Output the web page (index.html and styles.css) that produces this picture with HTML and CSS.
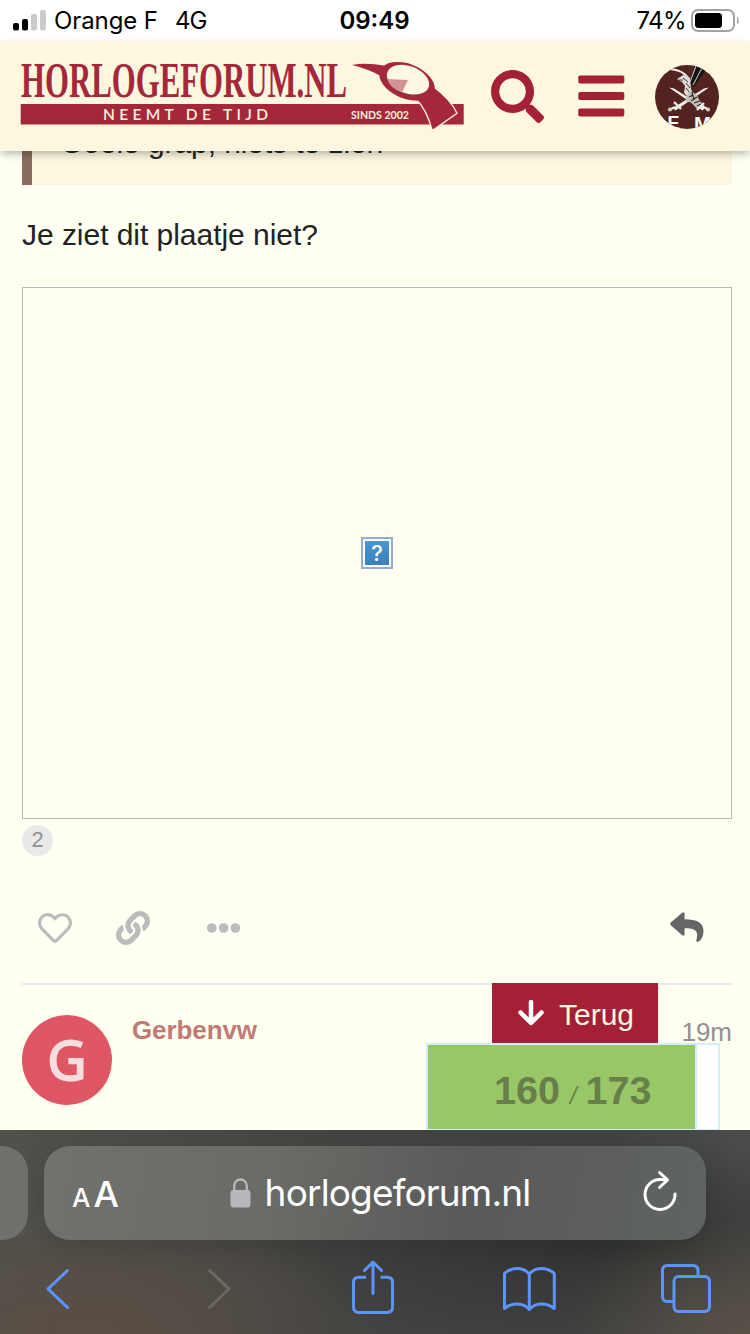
FILE: index.html
```html
<!DOCTYPE html>
<html lang="nl">
<head>
<meta charset="utf-8">
<title>Horlogeforum.nl</title>
<link rel="stylesheet" href="styles.css">
</head>
<body>
<div class="status">
  <div class="carrier">
    <svg class="signal" width="33" height="22" viewBox="0 0 33 22"><rect x="0" y="14" width="6" height="7.500" rx="2"/><rect x="9" y="10" width="6" height="11.500" rx="2"/><g fill="#cbcbcb"><rect x="18" y="5" width="6" height="16.500" rx="2"/><rect x="27" y="1" width="6" height="20.500" rx="2"/></g></svg>
    <span class="operator">Orange F</span><span class="network">4G</span>
  </div>
  <div class="clock">09:49</div>
  <div class="power"><span class="percent">74%</span>
    <svg width="48" height="24" viewBox="0 0 48 24"><rect x="1" y="1" width="42" height="21" rx="6" fill="none" stroke="#a3a3a3" stroke-width="2"/><rect x="4" y="4" width="27" height="15" rx="3.500"/><path d="M46 7.500c2.200 1 2.200 7 0 8z" fill="#a3a3a3"/></svg>
  </div>
</div>

<header class="site-header">
  <svg class="logo" width="446" height="76" viewBox="20 58 446 76">
    <text x="21" y="97" class="logo-name" textLength="326" lengthAdjust="spacingAndGlyphs">HORLOGEFORUM.NL</text>
    <rect x="20.700" y="104" width="443" height="20.500" fill="#a4283a"/>
    <text x="103" y="120" class="logo-tag" textLength="165">NEEMT DE TIJD</text>
    <text x="351" y="118.500" class="logo-since" textLength="58" lengthAdjust="spacingAndGlyphs">SINDS 2002</text>
    <g transform="translate(330 50) scale(.33333)" fill="#a4283a">
      <path d="M66 45Q105 36 166 47L190 60L152 78Q115 57 66 45Z"/>
      <path d="M258 147Q290 178 307 242L381 190Q364 150 308 108Z" stroke="#fdf3dc" stroke-width="4"/>
      <path d="M258 147L312 112L300 90L240 130Z"/>
      <ellipse cx="231" cy="94" rx="87" ry="52" transform="rotate(22 231 94)"/>
      <ellipse cx="234" cy="89" rx="66" ry="41" transform="rotate(20 234 89)" fill="#fdf9e2"/>
      <path d="M172 87L234 90L216 127Q177 112 172 87Z" fill="#d29394"/>
    </g>
  </svg>
  <nav class="header-icons">
    <svg width="53" height="53" viewBox="0 0 512 512"><path d="M505 442.700L405.300 343c-4.500-4.500-10.600-7-17-7H372c27.600-35.300 44-79.700 44-128C416 93.100 322.900 0 208 0S0 93.100 0 208s93.100 208 208 208c48.300 0 92.700-16.400 128-44v16.300c0 6.400 2.500 12.500 7 17l99.700 99.700c9.400 9.400 24.600 9.400 33.900 0l28.300-28.300c9.400-9.400 9.400-24.600.1-34zM208 336c-70.700 0-128-57.200-128-128 0-70.700 57.200-128 128-128 70.700 0 128 57.200 128 128 0 70.700-57.200 128-128 128z"/></svg>
    <svg class="bars" width="47" height="42" viewBox="0 0 47 42"><rect x=".3" y=".5" width="46" height="8" rx="1.700"/><rect x=".3" y="17" width="46" height="8" rx="1.700"/><rect x=".3" y="33.500" width="46" height="8" rx="1.700"/></svg>
    <svg class="me" width="64" height="64" viewBox="0 0 64 64">
      <defs><clipPath id="round"><circle cx="32" cy="32" r="32"/></clipPath></defs>
      <g clip-path="url(#round)">
        <rect width="64" height="64" fill="#53241f"/>
        <path d="M41 0L34 18L39 22L51 4L48 0Z" fill="#171514"/>
        <path d="M41 1L35 17M47 3L38 20" stroke="#d8d4d1" stroke-width="1" fill="none"/>
        <path d="M15 4Q28 5 33 13" stroke="#f4f1ee" stroke-width="2.200" fill="none"/>
        <path d="M22 14L30 9L35 13L36 24L39 30L34 33L29 28L30 21L27 17Z" fill="#dedad7"/>
        <path d="M28 13L33 17M31 18L35 23M31 23L35 28M24 15L28 15" stroke="#403735" stroke-width="1"/>
        <path d="M14 22.500L19 23.500L50 43L47.500 45.500ZM54 22.500L49 23.500L18 43L20.500 45.500Z" fill="#f4f2ef"/>
        <path d="M31 32L35 26L41 29L45 36L49 41L42 44L36 37L31 37Z" fill="#c5c0bb"/>
        <path d="M34 32L38 30M36 36L42 32M39 38L45 36M42 41L46 39M37 27L39 35" stroke="#302724" stroke-width="1.200"/>
        <path d="M19 37L26 44M14 45L20 42M42 45L49 38M47 41L54 45" stroke="#eeeae7" stroke-width="2.400"/>
        <circle cx="15" cy="44.500" r="2" fill="#d6d1cd"/><circle cx="53" cy="44.500" r="2" fill="#d6d1cd"/>
        <text x="12.500" y="63.500" class="crest" textLength="12" lengthAdjust="spacingAndGlyphs">E</text><text x="39" y="64.500" class="crest" textLength="17" lengthAdjust="spacingAndGlyphs">M</text>
      </g>
    </svg>
  </nav>
</header>

<main class="topic">
  <blockquote class="quote"><p>Goeie grap, niets te zien</p></blockquote>
  <p class="message">Je ziet dit plaatje niet?</p>
  <div class="missing-image"><span class="placeholder">?</span></div>
  <div class="clicks">2</div>
  <div class="actions">
    <svg width="34" height="34" viewBox="0 0 512 512"><path d="M458.400 64.300C400.600 15.700 311.300 23 256 79.300 200.700 23 111.400 15.600 53.600 64.300-21.600 127.600-10.600 230.800 43 285.500l175.400 178.700c10 10.200 23.400 15.900 37.600 15.900 14.300 0 27.600-5.600 37.600-15.800L469 285.600c53.500-54.700 64.700-157.900-10.600-221.300zm-23.600 187.500L259.400 430.500c-2.400 2.400-4.400 2.400-6.800 0L77.200 251.800c-36.500-37.200-43.900-107.600 7.300-150.700 38.900-32.700 98.900-27.800 136.500 10.500l35 35.700 35-35.700c37.800-38.500 97.800-43.200 136.500-10.600 51.100 43.100 43.500 113.900 7.300 150.800z"/></svg>
    <svg class="link" width="34" height="34" viewBox="0 0 512 512"><path d="M326.612 185.391c59.747 59.809 58.927 155.698.36 214.590-.11.12-.24.25-.36.37l-67.200 67.200c-59.270 59.270-155.699 59.262-214.960 0-59.270-59.260-59.270-155.700 0-214.960l37.106-37.106c9.840-9.840 26.786-3.300 27.294 10.606.648 17.722 3.826 35.527 9.690 52.721 1.986 5.822.567 12.262-3.783 16.612l-13.087 13.087c-28.026 28.026-28.905 73.660-1.155 101.960 28.024 28.579 74.086 28.749 102.325.51l67.200-67.190c28.191-28.191 28.073-73.757 0-101.830-3.701-3.694-7.429-6.564-10.341-8.569a16.037 16.037 0 0 1-6.947-12.606c-.396-10.567 3.348-21.456 11.698-29.806l21.054-21.055c5.521-5.521 14.182-6.199 20.584-1.731a152.482 152.482 0 0 1 20.522 17.197zM467.547 44.449c-59.261-59.262-155.690-59.270-214.960 0l-67.200 67.200c-.12.12-.25.25-.36.37-58.566 58.892-59.387 154.781.36 214.590a152.454 152.454 0 0 0 20.521 17.196c6.402 4.468 15.064 3.789 20.584-1.731l21.054-21.055c8.350-8.350 12.094-19.239 11.698-29.806a16.037 16.037 0 0 0-6.947-12.606c-2.912-2.005-6.640-4.875-10.341-8.569-28.073-28.073-28.191-73.639 0-101.830l67.200-67.190c28.239-28.239 74.300-28.069 102.325.51 27.750 28.300 26.872 73.934-1.155 101.960l-13.087 13.087c-4.350 4.350-5.769 10.790-3.783 16.612 5.864 17.194 9.042 34.999 9.690 52.721.509 13.906 17.454 20.446 27.294 10.606l37.106-37.106c59.271-59.259 59.271-155.699.001-214.959z"/></svg>
    <svg class="more" width="34" height="10" viewBox="0 0 34 10"><circle cx="4.800" cy="5" r="4.800"/><circle cx="16.600" cy="5" r="4.800"/><circle cx="28.400" cy="5" r="4.800"/></svg>
    <svg class="reply" width="34" height="31" viewBox="0 0 35 32"><path d="M.5 11L12.500 .8Q15 -.7 15 2V7.500C28 7.500 34.500 11 34.500 20C34.500 24.500 32.500 28.500 29.500 30.500C27.600 31.600 26.700 30.300 27.300 28.500C29.800 19.500 26 16.700 15 16.700V22.500Q15 25.500 12.500 24L.5 13.500Q-.5 12.200 .5 11Z"/></svg>
  </div>
  <article class="post">
    <div class="avatar">G</div>
    <div class="author">Gerbenvw</div>
    <div class="age">19m</div>
  </article>
</main>

<div class="progress-wrap">
  <div class="back"><svg width="26" height="26" viewBox="0 0 26 26"><path d="M13 2V22M2.500 12.500L13 23L23.500 12.500" fill="none" stroke="#fff" stroke-width="4.500" stroke-linecap="round" stroke-linejoin="round"/></svg><span>Terug</span></div>
  <div class="progress"><div class="filled"><b>160</b><i>/</i><b>173</b></div></div>
</div>

<footer class="browser">
  <div class="tabs">
    <div class="tab-edge"></div>
    <div class="address">
      <span class="aa"><small>A</small>A</span>
      <div class="host">
        <svg width="21" height="30" viewBox="0 0 21 30"><rect x=".5" y="12" width="20" height="17.500" rx="3" fill="#b8b7be"/><path d="M4.200 13V8.500C4.200-.8 16.800-.8 16.800 8.500V13" fill="none" stroke="#b8b7be" stroke-width="2.400"/></svg>
        <span>horlogeforum.nl</span>
      </div>
      <svg class="reload" width="36" height="42" viewBox="0 0 36 42"><path d="M33 24A15 15 0 1 1 18 9.500H25M17.500 2.500L25.500 9.800L17.500 17.500" fill="none" stroke="#fff" stroke-width="3" stroke-linecap="round" stroke-linejoin="round"/></svg>
    </div>
  </div>
  <svg class="tools" width="750" height="94" viewBox="0 1240 750 94" fill="none" stroke="#5b95fc" stroke-width="3" stroke-linecap="round" stroke-linejoin="round">
    <path d="M67.500 1270.500L48 1288.800L67.500 1307.500"/>
    <path d="M209.500 1270.500L229 1288.800L209.500 1307.500" stroke="#686866"/>
    <path d="M366 1277.300H359Q353.500 1277.300 353.500 1282.500V1307Q353.500 1312.500 359 1312.500H387Q392.500 1312.500 392.500 1307V1282.500Q392.500 1277.300 387 1277.300H380.500" stroke-linecap="butt"/><path d="M373 1293.500V1263M364.500 1270.500L373 1262L381.500 1270.500"/>
    <path d="M529.300 1274C523 1266.500 511.500 1267 504.500 1273.500V1308.500C511.500 1302.500 523 1302 529.300 1309.500C535.600 1302 547 1302.500 554.300 1308.500V1273.500C547 1267 535.600 1266.500 529.300 1274V1309.500"/>
    <rect x="674" y="1276.500" width="35.500" height="35" rx="4.500"/><path d="M673.500 1301.500H667.500Q662.500 1301.500 662.500 1296.500V1270.500Q662.500 1265.500 667.500 1265.500H693Q698 1265.500 698 1270.500V1276"/>
  </svg>
</footer>
</body>
</html>
```
FILE: styles.css
```css
* { box-sizing: border-box; }
body {
  margin: 0; width: 750px; height: 1334px; overflow: hidden; position: relative;
  display: flex; flex-direction: column;
  background: #fffff2; color: #222;
  font-family: "Liberation Sans", Arial, sans-serif;
}
p { margin: 0; }
svg { display: block; flex: none; }

.status {
  height: 41px; flex: none; background: #fff; color: #000;
  display: grid; grid-template-columns: 1fr auto 1fr; align-items: center;
  padding: 0 11px 0 13px;
  font: 24px/40px Inter, sans-serif;
}
.carrier, .power { display: flex; align-items: center; }
.signal { margin-right: 8px; margin-top: -2px; }
.operator { letter-spacing: -.1px; }
.network { margin-left: 17px; letter-spacing: -.9px; }
.clock { font-weight: 600; margin-right: 3px; }
.power { justify-content: flex-end; gap: 5px; }
.percent { letter-spacing: -.6px; }

.site-header {
  height: 110px; flex: none; position: relative; z-index: 2;
  display: flex; align-items: center; padding: 0 31px 0 20px;
  background: #fcf7de; box-shadow: 0 4px 8px -1px rgba(0, 0, 0, .28);
}
.header-icons { display: flex; align-items: center; margin-left: 25px; fill: #a32035; }
.bars { margin-left: 34px; }
.me { margin-left: 30px; margin-top: 2px; }
.logo-name { font: bold 51px "Liberation Serif", serif; fill: #a4283a; }
.logo-tag { font: 600 15.500px Lato, sans-serif; fill: #fdf3dc; }
.logo-since { font: bold 10.800px Lato, sans-serif; fill: #fdf3dc; }
.crest { font: bold 18px "Liberation Sans", sans-serif; fill: #fff; }

.topic { flex: 1; min-height: 0; display: flex; flex-direction: column; padding: 0 18px 0 22px; }
.quote {
  margin: 0; height: 34px; flex: none; overflow: hidden;
  background: #fdf7e0; border-left: 10px solid #8a6d60; padding-left: 28px;
  font-size: 30px; line-height: 42px; letter-spacing: -.08px;
}
.quote p { margin-top: -29px; }
.message { margin: 29px 0 31px; font-size: 30px; line-height: 42px; letter-spacing: -.04px; }
.missing-image {
  height: 532px; flex: none; border: 1px solid #bababa;
  display: flex; align-items: center; justify-content: center;
}
.placeholder {
  width: 32px; height: 32px; border: 2px solid #93add4; box-shadow: inset 0 0 0 2px #fff;
  background: linear-gradient(#4f98cf, #387db9); color: #fff;
  font: 500 22px/28px Inter, sans-serif; text-align: center;
}
.clicks {
  margin-top: 6px; width: 31px; height: 31px; border-radius: 50%; flex: none;
  background: #e9e9e9; color: #919191; font-size: 22px; line-height: 30px; text-align: center;
}
.actions { height: 127px; flex: none; display: flex; align-items: center; padding: 16px 28px 0 16px; fill: #bcbcbc; }
.link { margin-left: 44px; }
.more { margin-left: 57px; }
.reply { margin-left: auto; fill: #666; }
.post { border-top: 2px solid #e9e9e9; padding-top: 30px; display: flex; align-items: flex-start; }
.avatar {
  width: 90px; height: 90px; border-radius: 50%; background: #df5765; color: #f8dde0;
  font: 400 54px/88px "Noto Sans", sans-serif; text-align: center;
  -webkit-text-stroke: 1.800px #f8dde0;
}
.author { margin-left: 20px; font-size: 26px; line-height: 30px; font-weight: bold; color: #c17b74; letter-spacing: -.1px; }
.age { margin: 2px 0 0 auto; font-size: 26px; line-height: 30px; color: #919191; }

.progress-wrap { position: absolute; right: 30px; bottom: 204px; width: 294px; z-index: 1; }
.back {
  width: 166px; height: 60px; margin-left: 66px; padding-left: 26px;
  display: flex; align-items: center; gap: 15px;
  background: #a32035; color: #fdf8df; font-size: 30px; line-height: 34px;
}
.back span { padding-top: 4px; }
.progress { height: 87px; border: 2px solid #d5edfa; border-bottom-width: 1px; background: #fff; }
.filled {
  width: 269px; height: 84px; background: #99c767; border-right: 2px solid #d5edfa; color: #687f4c;
  display: flex; align-items: baseline; padding-left: 66px; font-size: 39.500px; line-height: 90px;
}
.filled i { font-size: 24px; margin: 0 9px 0 10px; }

.browser {
  height: 204px; flex: none; position: relative; z-index: 3;
  background:
    radial-gradient(ellipse 280px 130px at 90px 204px, #5b4e45 0%, rgba(91, 78, 69, 0) 100%),
    radial-gradient(ellipse 190px 120px at 750px 204px, #585047 0%, rgba(88, 80, 71, 0) 100%),
    radial-gradient(ellipse 340px 110px at 590px 115px, #333332 0%, rgba(51, 51, 50, 0) 100%),
    linear-gradient(90deg, #50514b, #444442 45%, #414342 80%, #494c4a);
}
.tabs { display: flex; gap: 16px; padding-top: 16px; }
.tab-edge { width: 28px; height: 94px; border-radius: 0 26px 26px 0; background: #70706c; }
.address {
  width: 662px; height: 94px; border-radius: 26px;
  display: flex; align-items: center; justify-content: space-between; padding: 0 28px;
  background: linear-gradient(100deg, #71726d, #6a6a67 35%, #595a58 65%, #606364);
  box-shadow: 0 8px 26px rgba(0, 0, 0, .13); color: #fff;
}
.aa { font: 500 36px/94px Inter, sans-serif; letter-spacing: -1px; padding-top: 5px; }
.aa small { font-size: 26px; margin-right: 4px; }
.host { display: flex; align-items: center; gap: 14px; font: 37px/92px Inter, sans-serif; letter-spacing: -.85px; }
.reload { margin-top: -5px; }
```
